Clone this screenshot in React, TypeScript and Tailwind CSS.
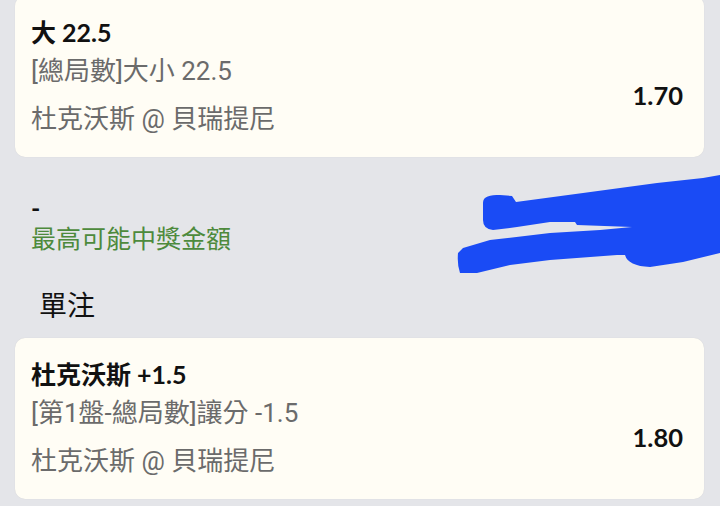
import React from "react";

const latin = { fontFamily: 'Lato, "Noto Sans CJK TC", sans-serif' };
const body = { fontFamily: 'Roboto, "Noto Sans CJK TC", sans-serif' };
const cjk = { fontFamily: '"Noto Sans CJK TC", sans-serif' };

function BetCard({
  title,
  market,
  match,
  odds,
  className = "",
}: {
  title: string;
  market: string;
  match: string;
  odds: string;
  className?: string;
}) {
  return (
    <div
      className={`mx-[15px] mr-[16px] rounded-[10px] bg-[#fffdf5] pl-4 pr-[21px] pt-[20px] pb-[22px] shadow-[0_0_1px_rgba(0,0,0,0.12)] ${className}`}
    >
      <div style={latin} className="text-[25px] leading-[32px] font-bold text-[#111]">
        {title}
      </div>
      <div className="flex items-center justify-between">
        <div style={body} className="text-[26px] text-[#6b6b6b]">
          <div className="mt-[7px] leading-[32px]">{market}</div>
          <div className="mt-[16px] leading-[32px]">{match}</div>
        </div>
        <div style={latin} className="mt-[7px] text-[25.5px] font-bold text-[#111] leading-[32px]">
          {odds}
        </div>
      </div>
    </div>
  );
}

export default function App() {
  return (
    <div className="relative w-[720px] h-[506px] overflow-hidden bg-[#e4e5e9]">
      <BetCard
        className="-mt-1"
        title="大 22.5"
        market="[總局數]大小 22.5"
        match="杜克沃斯 @ 貝瑞提尼"
        odds="1.70"
      />
      <div className="pl-[31px] pt-[35px]">
        <div style={latin} className="text-[25px] leading-[30px] font-bold text-[#111]">
          -
        </div>
        <div style={cjk} className="text-[25px] leading-[30px] text-[#4d8a3c]">
          最高可能中獎金額
        </div>
        <div style={cjk} className="mt-[35px] pl-2 text-[28px] leading-[34px] text-[#111]">
          單注
        </div>
      </div>
      <BetCard
        className="mt-[17px]"
        title="杜克沃斯 +1.5"
        market="[第1盤-總局數]讓分 -1.5"
        match="杜克沃斯 @ 貝瑞提尼"
        odds="1.80"
      />
      <svg
        className="absolute left-[450px] top-[165px]"
        width="270"
        height="115"
        viewBox="0 0 270 115"
      >
        <path
          fill="#1a4bf5"
          d="M 33 38 C 33 31, 40 30, 50 30 L 62 31 L 66 37 L 133 28 L 207 18 L 253 13 L 270 10 L 270 88 L 233 97 L 200 102 Q 178 101, 175 90 L 167 90 L 100 95 L 60 100 L 27 108 L 10 108 Q 7 100, 8 88 L 13 83 L 40 75 L 100 68 L 150 65 L 182 62 L 127 60 L 125 57 L 100 57 L 67 62 L 43 65 Q 33 64, 33 55 Z"
        />
      </svg>
    </div>
  );
}
